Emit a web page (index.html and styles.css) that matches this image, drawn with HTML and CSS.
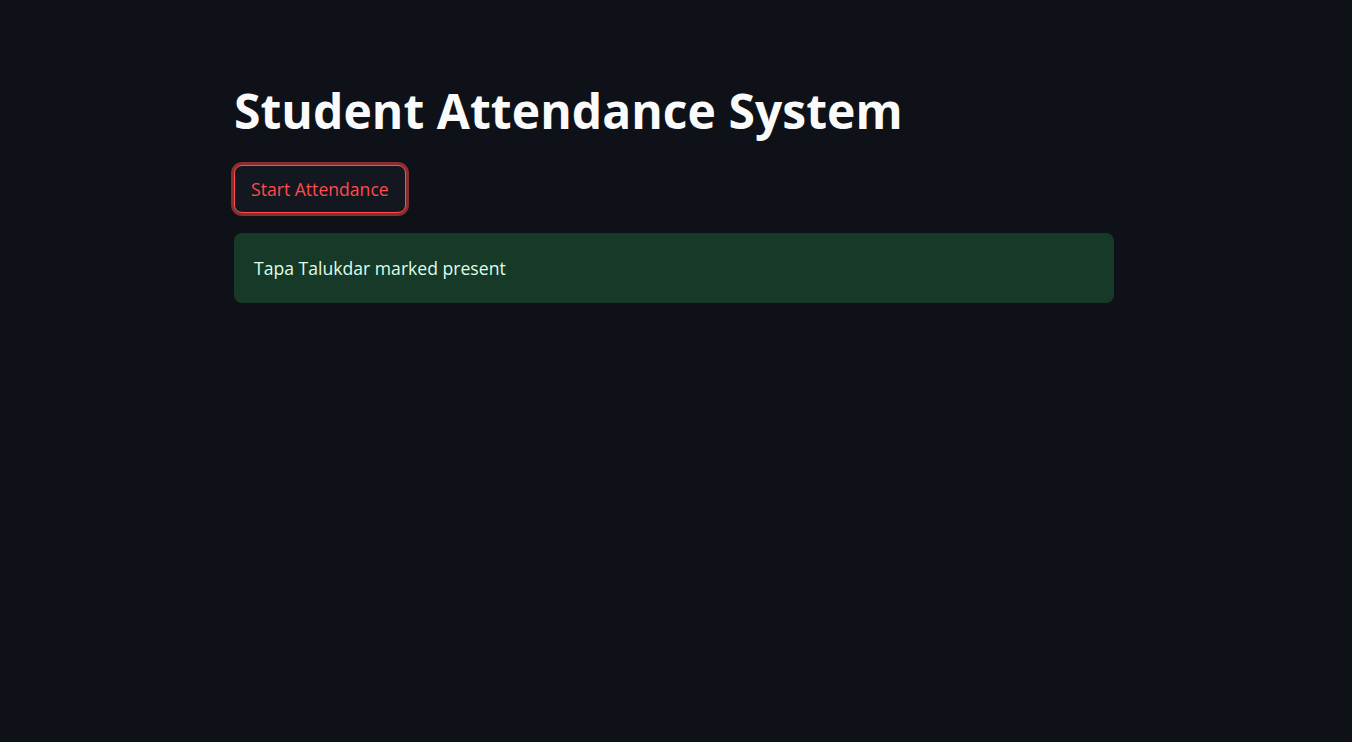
FILE: index.html
```html
<!DOCTYPE html>
<html lang="en">
<head>
<meta charset="utf-8">
<title>Student Attendance System</title>
<link rel="stylesheet" href="styles.css">
</head>
<body>
<main class="app">
  <div class="block">
    <h1 class="title">Student Attendance System</h1>
    <div class="row">
      <button class="btn" type="button">Start Attendance</button>
    </div>
    <div class="alert-success">Tapa Talukdar marked present</div>
  </div>
</main>
</body>
</html>
```
FILE: styles.css
```css
html, body {
  margin: 0;
  padding: 0;
  background: #0e1117;
  height: 100%;
}
body {
  font-family: "Open Sans", Lato, sans-serif;
  color: #fafafa;
}
.app {
  display: flex;
  justify-content: center;
  padding: 82px 4px 0 0;
}
.block {
  width: 880px;
  display: flex;
  flex-direction: column;
}
.title {
  margin: 0;
  font-size: 48px;
  font-weight: 700;
  line-height: 57.6px;
  color: #fafafa;
  letter-spacing: 0.05px;
}
.row {
  margin-top: 25.4px;
  display: flex;
}
.btn {
  font-family: inherit;
  font-size: 17.6px;
  line-height: 24px;
  color: #ff4b4b;
  background: #131720;
  border: 1px solid #ff4b4b;
  border-radius: 8px;
  box-shadow: 0 0 0 3px rgba(255, 75, 75, 0.5);
  padding: 0 16px;
  height: 48px;
  cursor: pointer;
}
.alert-success {
  margin-top: 20px;
  background: #173928;
  color: #dffde9;
  border-radius: 8px;
  padding: 21px 20px;
  font-size: 17.6px;
  line-height: 28px;
}
```
